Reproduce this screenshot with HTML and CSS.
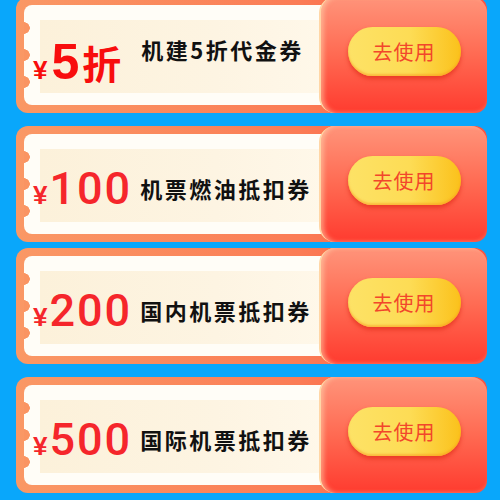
FILE: index.html
```html
<!DOCTYPE html>
<html lang="zh-CN">
<head>
  <meta charset="UTF-8" />
  <meta name="viewport" content="width=device-width, initial-scale=1.0" />
  <title>优惠券</title>
  <link rel="stylesheet" href="styles.css">
</head>
<body>
  <div class="coupon-list">
    <div class="coupon coupon-discount">
      <div class="ticket">
        <div class="price"><span class="yen">¥</span><span class="num">5</span><span class="unit">折</span></div>
        <div class="title">机建5折代金券</div>
      </div>
      <div class="action"><button class="use-btn">去使用</button></div>
    </div>

    <div class="coupon">
      <div class="ticket">
        <div class="price"><span class="yen">¥</span><span class="num">100</span></div>
        <div class="title">机票燃油抵扣券</div>
      </div>
      <div class="action"><button class="use-btn">去使用</button></div>
    </div>

    <div class="coupon">
      <div class="ticket">
        <div class="price"><span class="yen">¥</span><span class="num">200</span></div>
        <div class="title">国内机票抵扣券</div>
      </div>
      <div class="action"><button class="use-btn">去使用</button></div>
    </div>

    <div class="coupon">
      <div class="ticket">
        <div class="price"><span class="yen">¥</span><span class="num">500</span></div>
        <div class="title">国际机票抵扣券</div>
      </div>
      <div class="action"><button class="use-btn">去使用</button></div>
    </div>
  </div>
</body>
</html>
```

FILE: styles.css
```css
body {
  margin: 0;
  background: #09a7fb;
  font-family: "Liberation Sans", "Noto Sans CJK SC", sans-serif;
  height: 500px;
  overflow: hidden;
}
.coupon-list {
  display: flex;
  flex-direction: column;
  gap: 13px;
  margin-top: -3px;
  padding: 0 13px 0 16px;
}
.coupon {
  display: flex;
  height: 116px;
  border-radius: 12px;
  background: linear-gradient(90deg, #fa9865 0%, #fb7c55 60%, #fc5340 100%);
}
.coupon:nth-child(3) {
  margin-top: -7px;
}

/* left part: white ticket with notches and a cream face */
.ticket {
  flex: 1;
  display: flex;
  align-items: center;
  margin: 8px 0 8px 8px;
  padding: 8px 0 0 9px;
  border-radius: 8px;
  background:
    radial-gradient(circle at 0 calc(50% - 27px), #fa9462 5.5px, transparent 6px),
    radial-gradient(circle at 0 50%, #fa9462 5.5px, transparent 6px),
    radial-gradient(circle at 0 calc(50% + 27px), #fa9462 5.5px, transparent 6px),
    linear-gradient(90deg, #fcf1da 0%, #fdf4e2 60%, #fff8ea 100%) 16px 15px / calc(100% - 16px) calc(100% - 27px) no-repeat,
    #fffdf7;
}
.price {
  display: flex;
  align-items: baseline;
  color: #f5262b;
  white-space: nowrap;
}
.yen {
  font-size: 26px;
  font-weight: bold;
  margin-right: 2px;
}
.num {
  font-family: Roboto, "Liberation Sans", sans-serif;
  font-size: 45px;
  font-weight: 500;
  letter-spacing: 2px;
}
.title {
  margin-left: 8px;
  font-family: "Noto Sans CJK SC", sans-serif;
  font-size: 22px;
  font-weight: bold;
  letter-spacing: 2.5px;
  color: #111;
  white-space: nowrap;
}

.coupon-discount .price {
  color: #f80d0d;
  padding-top: 6px;
}
.coupon-discount .num {
  font-family: "Liberation Sans", sans-serif;
  font-size: 50px;
  font-weight: bold;
  letter-spacing: 0;
  margin-left: 2px;
}
.coupon-discount .unit {
  font-family: "Noto Sans CJK SC", sans-serif;
  font-size: 39px;
  font-weight: bold;
  margin-left: 3px;
}
.coupon-discount .title {
  margin-left: 20px;
  padding-bottom: 20px;
}

/* right part */
.action {
  flex: 0 0 168px;
  margin-left: -14px;
  display: flex;
  align-items: center;
  justify-content: center;
  padding-bottom: 8px;
  box-sizing: border-box;
  border-left: 2px solid #ffd6a6;
  border-radius: 16px;
  background: linear-gradient(180deg, #ff947a 0%, #ff6a52 50%, #ff3b2f 100%);
  box-shadow: inset 3px 0 4px rgba(255, 220, 180, 0.5);
}
.use-btn {
  width: 113px;
  height: 49px;
  border: none;
  border-radius: 25px;
  background: linear-gradient(90deg, #fde266 0%, #fddc55 55%, #fbc11b 100%);
  box-shadow: 0 3px 4px rgba(225, 45, 25, 0.7), inset 0 -2px 2px rgba(250, 150, 30, 0.5);
  color: #f2462b;
  font-family: "Noto Sans CJK SC", sans-serif;
  font-size: 20px;
  letter-spacing: 1px;
  cursor: pointer;
}
```
